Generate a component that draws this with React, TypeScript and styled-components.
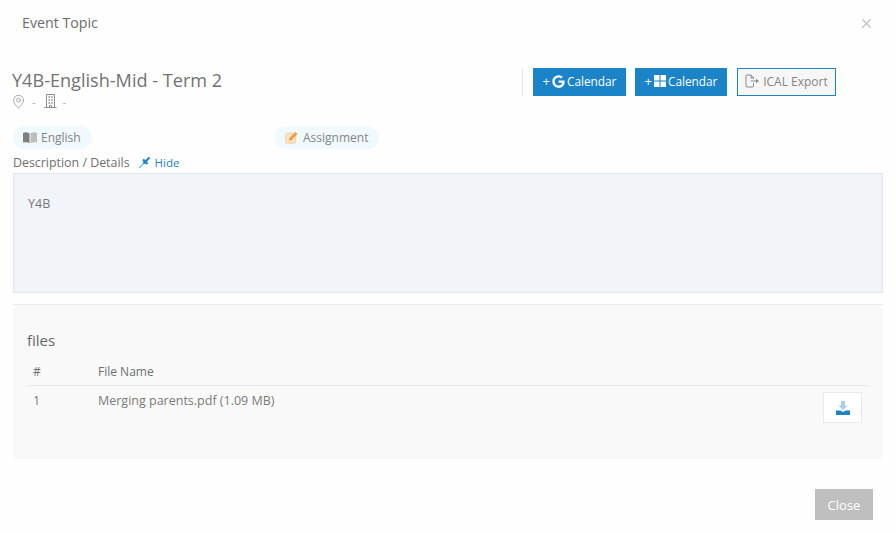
import React from 'react';
import styled, { createGlobalStyle } from 'styled-components';
import { FaGoogle } from 'react-icons/fa';
import { X, MapPin } from 'lucide-react';

const GlobalStyle = createGlobalStyle`
  * {
    box-sizing: border-box;
  }
  html, body {
    margin: 0;
    padding: 0;
    background: #fefefe;
  }
  body {
    font-family: "Open Sans", "Liberation Sans", sans-serif;
    font-size: 12px;
    color: #6f6f6f;
  }
`;

const Modal = styled.div`
  width: 896px;
  height: 533px;
  overflow: hidden;
`;

const Header = styled.header`
  display: flex;
  justify-content: space-between;
  align-items: center;
  height: 46px;
  padding: 0 22px 0 22px;
`;

const ModalTitle = styled.h4`
  margin: 0;
  font-size: 14.2px;
  font-weight: 500;
  line-height: 20px;
  color: #6b6b6b;
`;

const CloseIcon = styled(X)`
  color: #c6c6c6;
  width: 15px;
  height: 15px;
  stroke-width: 2.4;
`;

const Body = styled.div`
  padding: 22px 13px 0;
`;

const TopRow = styled.div`
  display: flex;
  height: 54px;
`;

const EventInfo = styled.div`
  flex: 0 0 509px;
`;

const EventTitle = styled.h2`
  margin: 0 0 0 -1px;
  font-size: 18.1px;
  font-weight: 500;
  line-height: 24px;
  color: #727272;
`;

const MetaRow = styled.div`
  display: flex;
  align-items: center;
  height: 16px;
  margin: 1px 0 0 -2px;
  color: #8d8d8d;
  font-size: 11px;
`;

const MetaDash = styled.span<{ $gap: number }>`
  margin: 0 ${p => p.$gap}px 0 6px;
  color: #aaa;
`;

const Actions = styled.div`
  display: flex;
  align-items: flex-start;
  height: 28px;
  padding-left: 10px;
  border-left: 1px solid #e6e6e6;
`;

const CalendarButton = styled.button<{ $width: number }>`
  display: flex;
  align-items: center;
  justify-content: center;
  gap: 2px;
  width: ${p => p.$width}px;
  height: 28px;
  margin-right: 9px;
  padding: 0 0 2px;
  border: 0;
  background: #1b84c8;
  color: #fff;
  font: 500 11.8px "Open Sans", sans-serif;
`;

const Plus = styled.span`
  font-size: 13px;
  line-height: 1;
`;

const ExportButton = styled.button`
  display: flex;
  align-items: center;
  justify-content: center;
  gap: 3px;
  width: 99px;
  height: 28px;
  margin-left: 1px;
  padding: 0 0 2px;
  border: 1px solid #1b84c8;
  background: #f6f6f6;
  color: #858585;
  font: 400 12px "Open Sans", sans-serif;
`;

const TagRow = styled.div`
  display: grid;
  grid-template-columns: 262px 262px;
  margin-top: 4px;
`;

const Tag = styled.span`
  display: inline-flex;
  align-items: center;
  justify-self: start;
  gap: 4px;
  height: 23px;
  padding: 0 11px 1px 10px;
  border-radius: 12px;
  background: #f0f9fe;
  color: #858585;
  font-size: 12px;
`;

const DetailsHead = styled.div`
  display: flex;
  align-items: center;
  height: 20px;
  margin-top: 4px;
  padding-bottom: 2px;
`;

const DetailsLabel = styled.span`
  font-size: 12.4px;
  font-weight: 500;
  color: #707070;
`;

const HideLink = styled.a`
  display: flex;
  align-items: center;
  gap: 4px;
  margin-left: 8px;
  padding-top: 1px;
  color: #1b84c8;
  font-size: 11.5px;
`;

const DescriptionBox = styled.div`
  height: 120px;
  padding: 21px 14px 0;
  border: 1px solid #e4e8ee;
  background: #f1f5fa;
  font-size: 12.5px;
  line-height: 18px;
  color: #777;
`;

const FilesPanel = styled.section`
  height: 155px;
  margin-top: 11px;
  padding: 24px 15px 0 14px;
  border-top: 1px solid #e9e9e9;
  background: #f9f9f9;
`;

const FilesTitle = styled.h3`
  margin: 0;
  font-size: 15px;
  font-weight: 500;
  line-height: 22px;
  color: #666;
`;

const FilesTable = styled.div`
  margin: 11px 0 0 1px;
`;

const TableRow = styled.div<{ $head?: boolean }>`
  display: grid;
  grid-template-columns: 65px 1fr 45px;
  padding-left: 5px;
  height: ${p => (p.$head ? '24px' : 'auto')};
  border-bottom: ${p => (p.$head ? '1px solid #e6e6e6' : '0')};
  font-size: ${p => (p.$head ? '12px' : '12.5px')};
  font-weight: ${p => (p.$head ? 500 : 400)};
  color: ${p => (p.$head ? '#707070' : '#7b7b7b')};
  line-height: ${p => (p.$head ? '19px' : '17px')};
`;

const RowCell = styled.div`
  padding-top: 6px;
`;

const DownloadButton = styled.button`
  display: flex;
  align-items: center;
  justify-content: center;
  width: 39px;
  height: 31px;
  margin-top: 6px;
  padding: 0;
  border: 1px solid #e6e9ef;
  background: #fff;
`;

const Footer = styled.footer`
  display: flex;
  justify-content: flex-end;
  padding: 30px 10px 0 0;
`;

const CloseButton = styled.button`
  width: 58px;
  height: 31px;
  padding: 0;
  border: 0;
  background: #bfbfbf;
  color: #fff;
  font: 400 13px "Open Sans", sans-serif;
`;

const BuildingIcon = () => (
  <svg width="13" height="14" viewBox="0 0 13 14" fill="none" stroke="#8d8d8d" strokeWidth="1">
    <path d="M2.500 13.500V.5h8v13M.5 13.500h12" />
    <path d="M4.500 3h1.500M7.200 3h1.500M4.500 6h1.500M7.200 6h1.500M4.500 9h1.500M7.200 9h1.500" strokeWidth="1.400" />
    <path d="M5.500 13.500v-2h2v2" />
  </svg>
);

const BookIcon = () => (
  <svg width="14" height="11" viewBox="0 0 14 11">
    <path d="M0 1c2-1 4-1 6.500.3V11C4.500 10 2 10 0 10.500z" fill="#7f7f7f" />
    <path d="M7.500 1.300C10 0 12 0 14 1v9.500c-2-.5-4.500-.5-6.500.5z" fill="#bdbdbd" />
  </svg>
);

const EditIcon = () => (
  <svg width="14" height="13" viewBox="0 0 14 13">
    <rect x="0.700" y="2.200" width="10" height="10" rx="1.500" fill="#fbe3c8" stroke="#f6cfa2" />
    <path d="M4 7.500L10.500 1l2 2L6 9.500H4z" fill="#f19a3e" />
  </svg>
);

const PinIcon = () => (
  <svg width="13" height="13" viewBox="0 0 13 13" fill="none">
    <path d="M1 12L6 7" stroke="#7fbde4" strokeWidth="1.400" />
    <path d="M5.500 7.500L11.500 1.500" stroke="#1b84c8" strokeWidth="2.200" />
    <path d="M5 3.500L9.500 8" stroke="#1b84c8" strokeWidth="2.400" />
  </svg>
);

const WindowsIcon = () => (
  <svg width="12" height="12" viewBox="0 0 12 12">
    <path d="M0 0h5.500v5.500H0zM6.500 0H12v5.500H6.500zM0 6.500h5.500V12H0zM6.500 6.500H12V12H6.500z" fill="#fff" />
  </svg>
);

const ExportIcon = () => (
  <svg width="15" height="14" viewBox="0 0 15 14" fill="none" stroke="#8a8a8a" strokeWidth="1">
    <path d="M8.500 9v3a1 1 0 0 1-1 1H2a1 1 0 0 1-1-1V2a1 1 0 0 1 1-1h4l2.500 2.500V5" />
    <path d="M6 1v3h2.500" />
    <path d="M5.500 7h6.500" />
    <path d="M11 4.800L14 7l-3 2.200z" fill="#8a8a8a" stroke="none" />
  </svg>
);

const DownloadIcon = () => (
  <svg width="14" height="14" viewBox="0 0 14 14">
    <path d="M5 0h4v4.500h2.500L7 9 2.500 4.500H5z" fill="#a5d0ec" />
    <path d="M0 9.500h4.500L7 11l2.500-1.500H14V14H0z" fill="#1b84c8" />
  </svg>
);

const App = () => (
  <>
    <GlobalStyle />
    <Modal>
      <Header>
        <ModalTitle>Event Topic</ModalTitle>
        <CloseIcon />
      </Header>
      <Body>
        <TopRow>
          <EventInfo>
            <EventTitle>Y4B-English-Mid - Term 2</EventTitle>
            <MetaRow>
              <MapPin size={15} strokeWidth={1.2} />
              <MetaDash $gap={8}>-</MetaDash>
              <BuildingIcon />
              <MetaDash $gap={0}>-</MetaDash>
            </MetaRow>
          </EventInfo>
          <Actions>
            <CalendarButton $width={93}>
              <Plus>+</Plus> <FaGoogle size={13} /> Calendar
            </CalendarButton>
            <CalendarButton $width={92}>
              <Plus>+</Plus> <WindowsIcon /> Calendar
            </CalendarButton>
            <ExportButton>
              <ExportIcon /> ICAL Export
            </ExportButton>
          </Actions>
        </TopRow>
        <TagRow>
          <Tag>
            <BookIcon /> English
          </Tag>
          <Tag>
            <EditIcon /> Assignment
          </Tag>
        </TagRow>
        <DetailsHead>
          <DetailsLabel>Description / Details</DetailsLabel>
          <HideLink>
            <PinIcon /> Hide
          </HideLink>
        </DetailsHead>
        <DescriptionBox>Y4B</DescriptionBox>
        <FilesPanel>
          <FilesTitle>files</FilesTitle>
          <FilesTable>
            <TableRow $head>
              <div>#</div>
              <div>File Name</div>
              <div />
            </TableRow>
            <TableRow>
              <RowCell>1</RowCell>
              <RowCell>Merging parents.pdf (1.09 MB)</RowCell>
              <DownloadButton>
                <DownloadIcon />
              </DownloadButton>
            </TableRow>
          </FilesTable>
        </FilesPanel>
        <Footer>
          <CloseButton>Close</CloseButton>
        </Footer>
      </Body>
    </Modal>
  </>
);

export default App;
